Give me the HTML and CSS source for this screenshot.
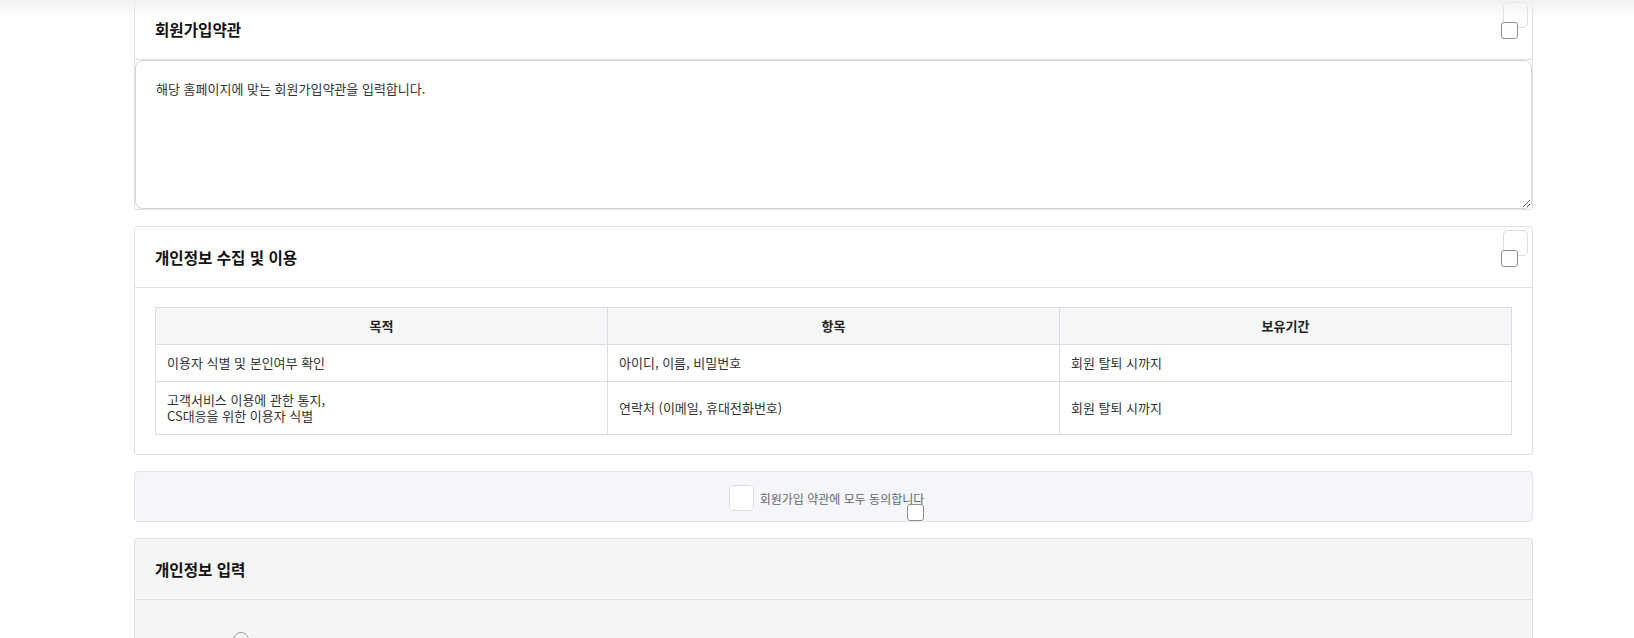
FILE: index.html
```
<!DOCTYPE html>
<html lang="ko">
<head>
    <meta charset="UTF-8">
    <meta name="viewport" content="width=device-width, initial-scale=1.0">
    <title>회원가입</title>
    <link rel="stylesheet" href="styles.css">
</head>
<body>

    <div class="top-shade"></div>

    <div class="join-wrap">

        <!-- 회원가입약관 -->
        <div class="box">
            <div class="box-head">
                <h2>회원가입약관</h2>
                <span class="fake-check"></span>
                <input type="checkbox" class="real-check">
            </div>
            <div class="box-terms">
                <textarea class="terms-text" readonly>해당 홈페이지에 맞는 회원가입약관을 입력합니다.</textarea>
            </div>
        </div>

        <!-- 개인정보 수집 및 이용 -->
        <div class="box">
            <div class="box-head">
                <h2>개인정보 수집 및 이용</h2>
                <span class="fake-check"></span>
                <input type="checkbox" class="real-check">
            </div>
            <div class="box-body">
                <table class="privacy-table">
                    <thead>
                        <tr>
                            <th>목적</th>
                            <th>항목</th>
                            <th>보유기간</th>
                        </tr>
                    </thead>
                    <tbody>
                        <tr>
                            <td>이용자 식별 및 본인여부 확인</td>
                            <td>아이디, 이름, 비밀번호</td>
                            <td>회원 탈퇴 시까지</td>
                        </tr>
                        <tr>
                            <td>고객서비스 이용에 관한 통지,<br>CS대응을 위한 이용자 식별</td>
                            <td>연락처 (이메일, 휴대전화번호)</td>
                            <td>회원 탈퇴 시까지</td>
                        </tr>
                    </tbody>
                </table>
            </div>
        </div>

        <!-- 전체 동의 -->
        <div class="agree-all">
            <label class="agree-label">
                <span class="fake-check"></span>
                <span class="agree-text">회원가입 약관에 모두 동의합니다</span>
                <input type="checkbox" class="real-check">
            </label>
        </div>

        <!-- 개인정보 입력 -->
        <div class="box box-gray">
            <div class="box-head">
                <h2>개인정보 입력</h2>
            </div>
            <div class="box-form">
                <span class="help-icon"></span>
            </div>
        </div>

    </div>

</body>
</html>
```

FILE: styles.css
```
body {
    font-family: "Noto Sans CJK KR", "Noto Sans", sans-serif;
    margin: 0;
    padding: 0;
    background: #fff;
    color: #333;
}

.top-shade {
    position: fixed;
    top: 0;
    left: 0;
    right: 0;
    height: 18px;
    background: linear-gradient(rgba(238, 238, 238, 0.8), rgba(255, 255, 255, 0));
    pointer-events: none;
    z-index: 5;
}

.join-wrap {
    width: 1399px;
    margin: -2px 0 0 134px;
    display: flex;
    flex-direction: column;
    gap: 16px;
}

.box {
    border: 1px solid #dde3e5;
    border-radius: 3px;
    background: #fff;
}

.box-gray {
    background: #f5f5f5;
}

.box-head {
    position: relative;
    height: 60px;
    display: flex;
    align-items: center;
    padding: 0 20px;
    border-bottom: 1px solid #dde3e5;
}

.box-head h2 {
    margin: 0;
    font-size: 15.6px;
    font-weight: 700;
    color: #111;
}

.fake-check {
    display: inline-block;
    width: 23px;
    height: 24px;
    border: 1px solid #dcdcdc;
    border-radius: 5px;
    background: #fff;
}

.box-head .fake-check {
    position: absolute;
    top: 3px;
    right: 4px;
}

.real-check {
    appearance: none;
    -webkit-appearance: none;
    width: 17px;
    height: 17px;
    margin: 0;
    border: 1px solid #8e8e8e;
    border-radius: 3px;
    background: #fff;
    box-sizing: border-box;
}

.box-head .real-check {
    position: absolute;
    top: 23px;
    right: 14px;
}

.box-terms {
    height: 149px;
}

.terms-text {
    display: block;
    width: 100%;
    height: 149px;
    box-sizing: border-box;
    margin: 0;
    padding: 19px 20px;
    border: 1px solid #d3d7d9;
    border-radius: 8px;
    font-family: inherit;
    font-size: 13px;
    line-height: 18px;
    color: #333;
    resize: vertical;
    outline: none;
}

.box-body {
    padding: 19px 20px 19px;
}

.privacy-table {
    width: 100%;
    border-collapse: collapse;
    table-layout: fixed;
    font-size: 13px;
    line-height: 16px;
}

.privacy-table th,
.privacy-table td {
    border: 1px solid #dcdde2;
    padding: 10px 11px;
    text-align: left;
    color: #333;
}

.privacy-table th {
    background: #f6f6f8;
    text-align: center;
    font-weight: 700;
    color: #222;
}

.agree-all {
    height: 49px;
    border: 1px solid #e1e4ea;
    border-radius: 4px;
    background: #f4f6f9;
    display: flex;
    align-items: center;
    justify-content: center;
}

.agree-label {
    position: relative;
    display: inline-flex;
    align-items: center;
    gap: 6px;
    font-size: 12px;
    color: #666;
    margin: 3px 14px 0 0;
}

.agree-label .real-check {
    position: absolute;
    left: 178px;
    top: 19px;
}

.box-form {
    height: 120px;
    padding: 32px 20px 0 98px;
}

.help-icon {
    display: block;
    width: 14px;
    height: 14px;
    border: 1.5px solid #a0a0a0;
    border-radius: 50%;
}
```
